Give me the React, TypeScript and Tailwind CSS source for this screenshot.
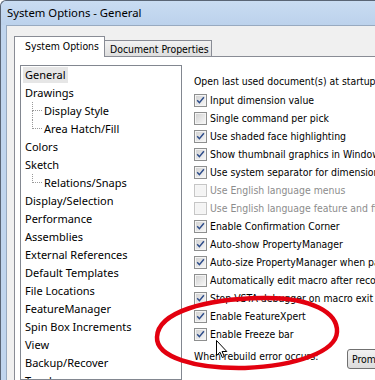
import React from "react";

type TreeItem = { t: string; sel?: boolean; child?: boolean; last?: boolean };

const tree: TreeItem[] = [
  { t: "General", sel: true },
  { t: "Drawings" },
  { t: "Display Style", child: true },
  { t: "Area Hatch/Fill", child: true, last: true },
  { t: "Colors" },
  { t: "Sketch" },
  { t: "Relations/Snaps", child: true, last: true },
  { t: "Display/Selection" },
  { t: "Performance" },
  { t: "Assemblies" },
  { t: "External References" },
  { t: "Default Templates" },
  { t: "File Locations" },
  { t: "FeatureManager" },
  { t: "Spin Box Increments" },
  { t: "View" },
  { t: "Backup/Recover" },
  { t: "Touch" },
];

type Opt = { t: string; checked?: boolean; disabled?: boolean };

const opts: Opt[] = [
  { t: "Input dimension value", checked: true },
  { t: "Single command per pick" },
  { t: "Use shaded face highlighting", checked: true },
  { t: "Show thumbnail graphics in Windows Explorer", checked: true },
  { t: "Use system separator for dimensions", checked: true },
  { t: "Use English language menus", disabled: true },
  { t: "Use English language feature and file names", disabled: true },
  { t: "Enable Confirmation Corner", checked: true },
  { t: "Auto-show PropertyManager", checked: true },
  { t: "Auto-size PropertyManager when panes are split", checked: true },
  { t: "Automatically edit macro after recording" },
  { t: "Stop VSTA debugger on macro exit", checked: true },
  { t: "Enable FeatureXpert", checked: true },
  { t: "Enable Freeze bar", checked: true },
];

function CheckBox({ checked, disabled }: { checked?: boolean; disabled?: boolean }) {
  return (
    <div
      className={
        "w-[13px] h-[13px] shrink-0 border p-[1px] " +
        (disabled ? "border-[#c6c6c6] bg-[#f6f6f6]" : "border-[#8e8f8f] bg-[#f4f4f4]")
      }
    >
      <div
        className={
          "w-full h-full relative " +
          (disabled ? "bg-[#f4f4f4]" : "bg-gradient-to-br from-[#d3d3d3] to-[#f6f6f6]")
        }
      >
        {checked && (
          <svg width="9" height="9" viewBox="0 0 9 9" className="absolute left-0 top-0">
            <path d="M1.2 4.3 L3.4 6.7 L7.9 1.3" stroke="#2d4c8a" strokeWidth="1.5" fill="none" />
          </svg>
        )}
      </div>
    </div>
  );
}

export default function App() {
  return (
    <div className="w-[375px] h-[380px] overflow-hidden relative bg-white text-black font-['Noto_Sans',sans-serif]">
      <div className="w-full h-full flex flex-col bg-[#c0d5ee] border-l border-t border-[#5a6575] rounded-tl-[6px]">
        {/* title bar */}
        <div className="h-[24px] shrink-0 flex items-center pl-[6px] bg-gradient-to-b from-[#c9dcf2] to-[#bcd2ec] text-[11.3px] leading-none rounded-tl-[6px] whitespace-nowrap">
          System Options - General
        </div>
        {/* body */}
        <div className="flex-1 flex pl-[5px] min-h-0">
          <div className="flex-1 flex flex-col bg-[#f0f0f0] border-l border-t border-[#98aac0] pl-[7px] pt-[10px] min-h-0">
            {/* tabs */}
            <div className="h-[21px] flex items-end relative z-10 shrink-0 whitespace-nowrap text-[10.4px] font-['DejaVu_Sans_Condensed',sans-serif]">
              <div className="h-[21px] w-[91px] bg-white border border-b-0 border-[#898c95] pl-[10px] leading-[19px]">
                System Options
              </div>
              <div className="h-[16px] w-[107px] mb-[1px] border border-l-0 border-b-0 border-[#898c95] bg-gradient-to-b from-[#f2f2f2] to-[#dedede] pl-[5px] leading-[16px]">
                Document Properties
              </div>
            </div>
            {/* panel */}
            <div className="flex-1 flex bg-white border-l border-t border-[#898c95] -mt-[1px] min-h-0">
              {/* tree */}
              <div className="ml-[5px] mt-[8px] w-[162px] shrink-0 border border-[#828790] bg-white overflow-hidden text-[11px]">
                {tree.map((it, i) => (
                  <div key={i} className={"h-[18px] flex items-center " + (it.child ? "pl-[11px]" : "pl-[2px]")}>
                    {it.child && (
                      <div className="w-[10px] h-[18px] flex flex-col shrink-0">
                        <div className="h-[9px] border-l border-b border-dotted border-[#9a9a9a]" />
                        <div className={"h-[9px] " + (it.last ? "" : "border-l border-dotted border-[#9a9a9a]")} />
                      </div>
                    )}
                    <span
                      className={
                        "px-[2px] h-[16px] leading-[16px] whitespace-nowrap " + (it.sel ? "bg-[#e6e6e6]" : "")
                      }
                    >
                      {it.t}
                    </span>
                  </div>
                ))}
              </div>
              {/* options */}
              <div className="flex-1 pl-[12px] pt-[15px] min-w-0 whitespace-nowrap text-[10.4px] font-['DejaVu_Sans_Condensed',sans-serif]">
                <div className="h-[18px] leading-[18px] mb-[1px]">Open last used document(s) at startup:</div>
                {opts.map((o, i) => (
                  <div key={i} className="h-[18px] flex items-center gap-[3px]">
                    <CheckBox checked={o.checked} disabled={o.disabled} />
                    <span className={"leading-[18px] " + (o.disabled ? "text-[#8c8c8c]" : "")}>{o.t}</span>
                  </div>
                ))}
                <div className="flex items-start mt-[4px]">
                  <span className="leading-[18px] w-[153px] shrink-0">When rebuild error occurs:</span>
                  <div className="mt-[2px] h-[20px] w-[80px] shrink-0 border border-[#707070] rounded-[3px] bg-gradient-to-b from-[#f2f2f2] to-[#dcdcdc] pl-[4px] leading-[18px]">
                    Prompt
                  </div>
                </div>
              </div>
            </div>
          </div>
        </div>
      </div>

      {/* mouse cursor */}
      <svg width="13" height="20" viewBox="0 0 13 20" className="absolute left-[216px] top-[340px] pointer-events-none">
        <path
          d="M0.5 0.5 L0.5 15.5 L4 12.2 L6.3 17.5 L8.3 16.6 L6.1 11.5 L10.8 11.5 Z"
          fill="white"
          stroke="black"
          strokeWidth="1"
          strokeLinejoin="miter"
        />
      </svg>

      {/* red hand-drawn ellipse */}
      <svg width="375" height="380" className="absolute left-0 top-0 pointer-events-none">
        <path
          d="M157 337 C158 312 205 299 262 298 C312 297 338 313 337 332 C336 352 295 366 245 368 C195 369 156 357 157 337 Z"
          fill="none"
          stroke="#e3000f"
          strokeWidth="4.5"
        />
      </svg>
    </div>
  );
}
